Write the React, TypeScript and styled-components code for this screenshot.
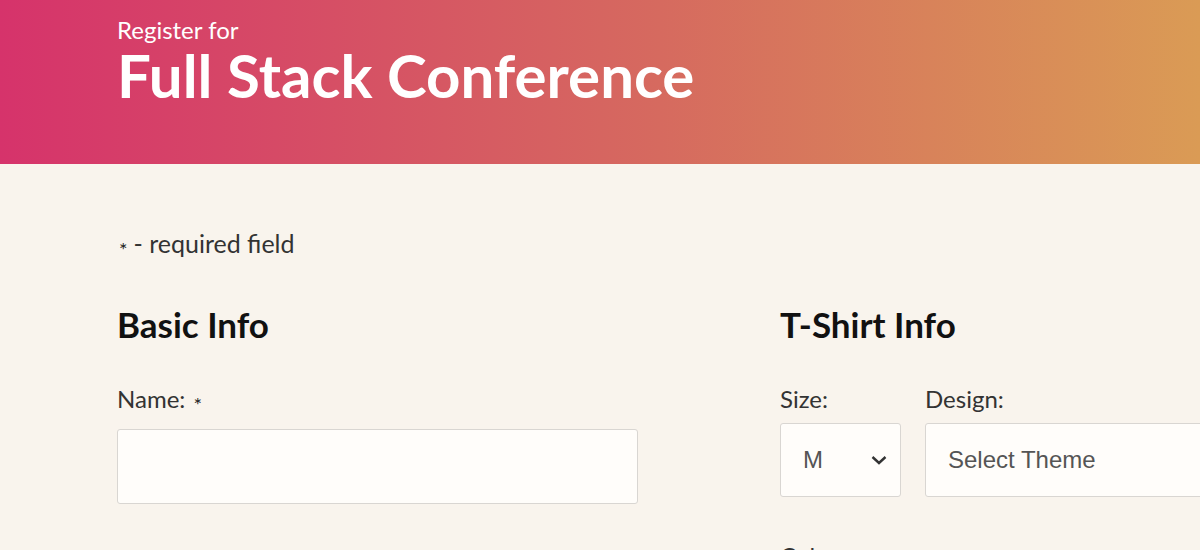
import React from "react";
import styled, { createGlobalStyle } from "styled-components";

const Global = createGlobalStyle`
  html, body {
    margin: 0;
    padding: 0;
    background: #f9f4ed;
    overflow: hidden;
  }
  body {
    font-family: Lato, "Noto Sans", sans-serif;
    color: #222;
  }
  * { box-sizing: border-box; }
`;

const Page = styled.div`
  width: 1200px;
  height: 550px;
  overflow: hidden;
  background: #f9f4ed;
`;

const Header = styled.header`
  height: 164px;
  padding: 16px 0 0 117px;
  background: linear-gradient(90deg, #d6336b 0%, #d66a5f 55%, #da9b55 100%);
  color: #fff;
`;

const Kicker = styled.div`
  font-size: 24px;
  line-height: 28px;
  font-weight: 400;
`;

const Title = styled.h1`
  margin: 1px 0 0;
  font-size: 60px;
  line-height: 60px;
  font-weight: 700;
`;

const Main = styled.main`
  padding: 61px 0 0 117px;
`;

const Required = styled.p`
  margin: 0;
  font-size: 25px;
  line-height: 36px;
  color: #333;
`;

const Star = styled.span`
  font-size: 20px;
  display: inline-block;
  transform: translateY(4px);
  margin: 0 6px 0 2px;
  color: #222;
`;

const Columns = styled.div`
  display: grid;
  grid-template-columns: 521px 521px;
  column-gap: 142px;
  margin-top: 39px;
`;

const Section = styled.section`
  display: flex;
  flex-direction: column;
`;

const Heading = styled.h2`
  margin: 0 0 38px;
  font-size: 35px;
  line-height: 44px;
  font-weight: 700;
  color: #111;
`;

const Label = styled.label<{ $gap?: number }>`
  display: block;
  font-size: 24px;
  line-height: 30px;
  color: #333;
  margin-bottom: ${(p) => p.$gap ?? 0}px;
`;

const TextInput = styled.input`
  display: block;
  width: 100%;
  height: 75px;
  border: 1px solid #d9d6d2;
  border-radius: 3px;
  background: #fffdfa;
  font-size: 24px;
  padding: 0 20px;
`;

const FieldRow = styled.div`
  display: flex;
  gap: 24px;
`;

const Field = styled.div<{ $grow?: boolean; $width?: number }>`
  display: flex;
  flex-direction: column;
  ${(p) => (p.$grow ? "flex: 1;" : `width: ${p.$width}px;`)}
`;

const SelectBox = styled.div`
  height: 74px;
  border: 1px solid #d9d6d2;
  border-radius: 3px;
  background: #fffdfa;
  display: flex;
  align-items: center;
  padding: 0 22px;
  font-family: "Liberation Sans", Arial, sans-serif;
  font-size: 24px;
  color: #555;
`;

const SelectText = styled.span`
  flex: 1;
`;

const Chevron = styled.svg`
  width: 18px;
  height: 18px;
  margin-right: -10px;
`;

const NextLabel = styled(Label)`
  margin-top: 44px;
`;

export default function App() {
  return (
    <Page>
      <Global />
      <Header>
        <Kicker>Register for</Kicker>
        <Title>Full Stack Conference</Title>
      </Header>
      <Main>
        <Required>
          <Star>*</Star>- required field
        </Required>
        <Columns>
          <Section>
            <Heading>Basic Info</Heading>
            <Label $gap={14}>
              Name: <Star>*</Star>
            </Label>
            <TextInput type="text" />
          </Section>
          <Section>
            <Heading>T-Shirt Info</Heading>
            <FieldRow>
              <Field $width={121}>
                <Label $gap={9}>Size:</Label>
                <SelectBox>
                  <SelectText>M</SelectText>
                  <Chevron viewBox="0 0 18 18">
                    <path d="M2.5 6 L9 12 L15.5 6" fill="none" stroke="#333" strokeWidth="2.4" />
                  </Chevron>
                </SelectBox>
              </Field>
              <Field $grow>
                <Label $gap={9}>Design:</Label>
                <SelectBox>
                  <SelectText>Select Theme</SelectText>
                </SelectBox>
              </Field>
            </FieldRow>
            <NextLabel>Color:</NextLabel>
          </Section>
        </Columns>
      </Main>
    </Page>
  );
}
